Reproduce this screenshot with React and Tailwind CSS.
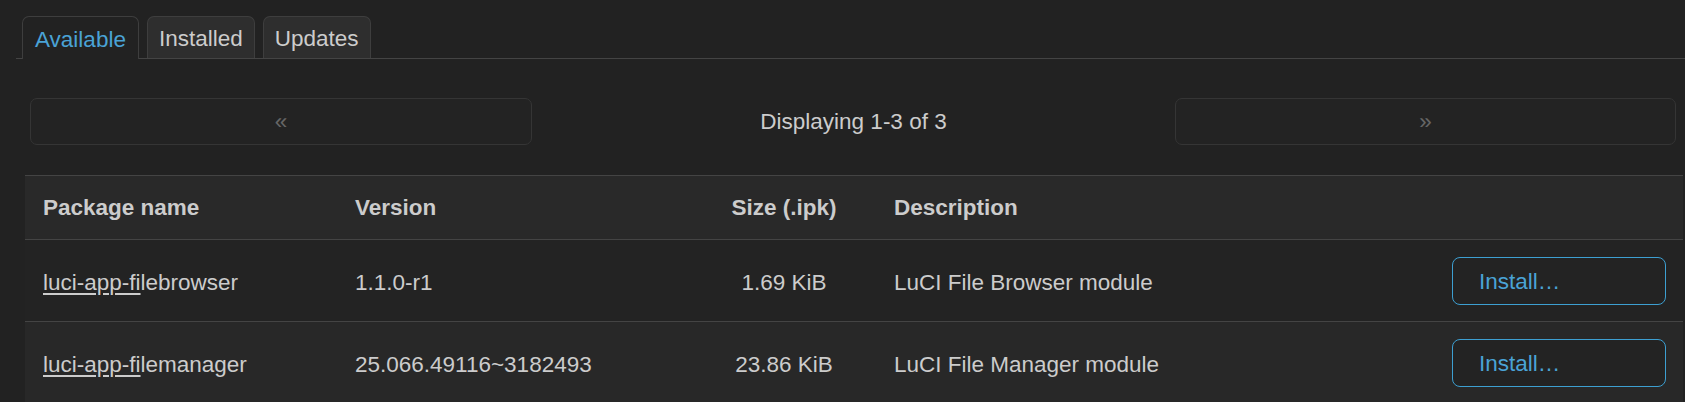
import React from "react";

const packages = [
  { match: "luci-app-fi", rest: "lebrowser", version: "1.1.0-r1", size: "1.69 KiB", desc: "LuCI File Browser module" },
  { match: "luci-app-fi", rest: "lemanager", version: "25.066.49116~3182493", size: "23.86 KiB", desc: "LuCI File Manager module" },
];

const App = () => {
  return (
    <div
      className="w-[1685px] h-[402px] overflow-hidden bg-[#222222] text-[#cccccc] pt-[16px]"
      style={{ fontFamily: '"Liberation Sans", Arial, sans-serif' }}
    >
      {/* Tabs */}
      <div className="ml-[16px] flex items-end gap-[8px] pl-[6px] border-b border-[#444444] h-[43px]">
        <div className="h-[43px] -mb-px px-[12px] pt-[3px] flex items-center rounded-t-[7px] border border-b-0 border-[#3e3e3e] bg-[#222222] text-[#4aa3d6] text-[22.5px]">
          Available
        </div>
        <div className="h-[42px] px-[11px] pt-[3px] flex items-center rounded-t-[7px] border border-b-0 border-[#3e3e3e] bg-[#2e2e2e] text-[#cccccc] text-[22.5px]">
          Installed
        </div>
        <div className="h-[42px] px-[11px] pt-[3px] flex items-center rounded-t-[7px] border border-b-0 border-[#3e3e3e] bg-[#2e2e2e] text-[#cccccc] text-[22.5px]">
          Updates
        </div>
      </div>

      {/* Pagination */}
      <div className="flex items-center mt-[39px] pl-[30px] pr-[9px]">
        <button className="w-[502px] h-[47px] rounded-[7px] border border-[#353535] bg-[#232323] text-[#666666] text-[22.5px]">
          «
        </button>
        <div className="flex-1 text-center text-[22.5px]">Displaying 1-3 of 3</div>
        <button className="w-[501px] h-[47px] rounded-[7px] border border-[#353535] bg-[#232323] text-[#666666] text-[22.5px]">
          »
        </button>
      </div>

      {/* Table */}
      <table className="ml-[25px] mt-[30px] w-[1658px] table-fixed border-collapse text-[22.5px]">
        <colgroup>
          <col className="w-[312px]" />
          <col className="w-[355px]" />
          <col className="w-[184px]" />
          <col className="w-[558px]" />
          <col className="w-[249px]" />
        </colgroup>
        <thead>
          <tr className="h-[64px] bg-[#292929] border-t border-b border-[#444444]">
            <th className="text-left font-bold pl-[18px]">Package name</th>
            <th className="text-left font-bold pl-[18px]">Version</th>
            <th className="text-center font-bold px-[18px]">Size (.ipk)</th>
            <th className="text-left font-bold pl-[18px]">Description</th>
            <th></th>
          </tr>
        </thead>
        <tbody>
          {packages.map((p, idx) => (
            <tr
              key={idx}
              className={`h-[82px] border-b border-[#444444] ${idx % 2 === 0 ? "bg-[#232323]" : "bg-[#282828]"}`}
            >
              <td className="pl-[18px] pt-[4px]">
                <span className="underline underline-offset-[3px]">{p.match}</span>
                {p.rest}
              </td>
              <td className="pl-[18px] pt-[4px]">{p.version}</td>
              <td className="text-center px-[18px] pt-[4px]">{p.size}</td>
              <td className="pl-[18px] pt-[4px]">{p.desc}</td>
              <td className="pr-[17px] text-right">
                <button className="w-[214px] h-[48px] pt-[3px] rounded-[8px] border border-[#3d9fd1] bg-[#232323] text-[#4aa3d6] text-left pl-[26px]">
                  Install…
                </button>
              </td>
            </tr>
          ))}
        </tbody>
      </table>
    </div>
  );
};

export default App;
